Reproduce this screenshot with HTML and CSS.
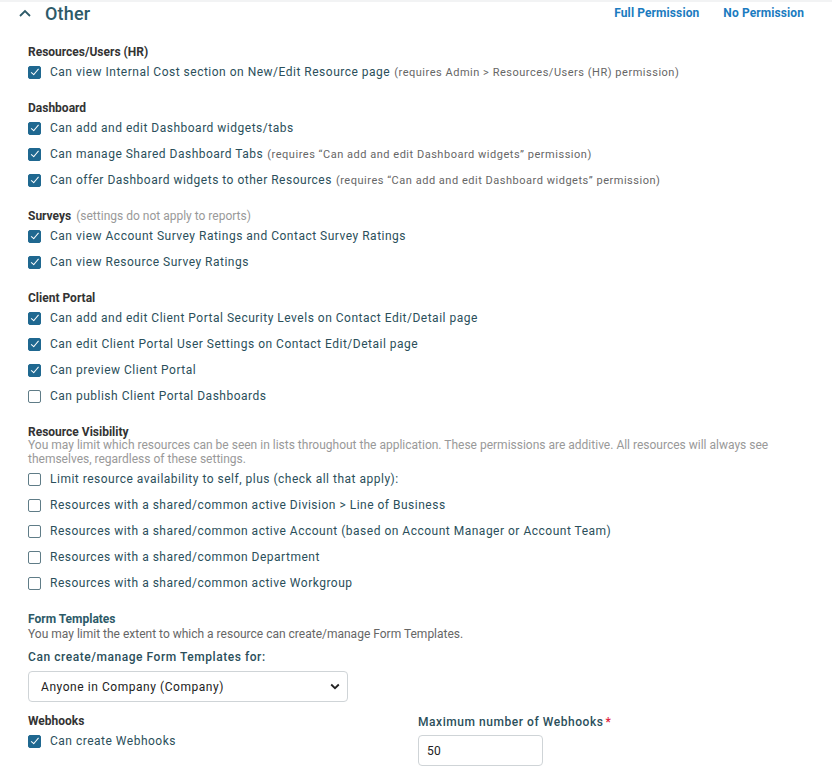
FILE: index.html
```html
<!DOCTYPE html>
<html>
<head>
<meta charset="utf-8">
<link rel="stylesheet" href="styles.css">
</head>
<body>
<div class="topstrip"></div>
<div class="header">
  <div class="title">
    <svg class="chev" width="14" height="10" viewBox="0 0 14 10"><path d="M2 8 L7 3 L12 8" fill="none" stroke="#2d5a68" stroke-width="1.8"/></svg>
    <span class="title-text">Other</span>
  </div>
  <div class="links">
    <a class="link">Full Permission</a>
    <a class="link">No Permission</a>
  </div>
</div>

<div class="content">
  <section class="group">
    <div class="heading">Resources/Users (HR)</div>
    <label class="row"><span class="cb on"></span><span class="lbl">Can view Internal Cost section on New/Edit Resource page</span><span class="note">(requires Admin &gt; Resources/Users (HR) permission)</span></label>
  </section>

  <section class="group">
    <div class="heading">Dashboard</div>
    <label class="row"><span class="cb on"></span><span class="lbl">Can add and edit Dashboard widgets/tabs</span></label>
    <label class="row"><span class="cb on"></span><span class="lbl">Can manage Shared Dashboard Tabs</span><span class="note">(requires “Can add and edit Dashboard widgets” permission)</span></label>
    <label class="row"><span class="cb on"></span><span class="lbl">Can offer Dashboard widgets to other Resources</span><span class="note">(requires “Can add and edit Dashboard widgets” permission)</span></label>
  </section>

  <section class="group">
    <div class="heading">Surveys <span class="heading-note">(settings do not apply to reports)</span></div>
    <label class="row"><span class="cb on"></span><span class="lbl">Can view Account Survey Ratings and Contact Survey Ratings</span></label>
    <label class="row"><span class="cb on"></span><span class="lbl">Can view Resource Survey Ratings</span></label>
  </section>

  <section class="group">
    <div class="heading">Client Portal</div>
    <label class="row"><span class="cb on"></span><span class="lbl">Can add and edit Client Portal Security Levels on Contact Edit/Detail page</span></label>
    <label class="row"><span class="cb on"></span><span class="lbl">Can edit Client Portal User Settings on Contact Edit/Detail page</span></label>
    <label class="row"><span class="cb on"></span><span class="lbl">Can preview Client Portal</span></label>
    <label class="row"><span class="cb"></span><span class="lbl">Can publish Client Portal Dashboards</span></label>
  </section>

  <section class="group">
    <div class="heading">Resource Visibility</div>
    <div class="desc">You may limit which resources can be seen in lists throughout the application. These permissions are additive. All resources will always see themselves, regardless of these settings.</div>
    <label class="row"><span class="cb"></span><span class="lbl">Limit resource availability to self, plus (check all that apply):</span></label>
    <label class="row"><span class="cb"></span><span class="lbl">Resources with a shared/common active Division &gt; Line of Business</span></label>
    <label class="row"><span class="cb"></span><span class="lbl">Resources with a shared/common active Account (based on Account Manager or Account Team)</span></label>
    <label class="row"><span class="cb"></span><span class="lbl">Resources with a shared/common Department</span></label>
    <label class="row"><span class="cb"></span><span class="lbl">Resources with a shared/common active Workgroup</span></label>
  </section>

  <section class="group tight">
    <div class="heading teal">Form Templates</div>
    <div class="desc dark">You may limit the extent to which a resource can create/manage Form Templates.</div>
    <div class="field-label">Can create/manage Form Templates for:</div>
    <div class="select">
      <span>Anyone in Company (Company)</span>
      <svg width="10" height="7" viewBox="0 0 10 7"><path d="M1.2 1.5 L5 5.2 L8.8 1.5" fill="none" stroke="#222" stroke-width="1.8"/></svg>
    </div>
  </section>

  <section class="group two-col">
    <div>
      <div class="heading">Webhooks</div>
      <label class="row"><span class="cb on"></span><span class="lbl">Can create Webhooks</span></label>
    </div>
    <div>
      <div class="field-label">Maximum number of Webhooks<span class="req">*</span></div>
      <div class="input">50</div>
    </div>
  </section>
</div>
</body>
</html>
```

FILE: styles.css
```css
html, body {
  margin: 0;
  padding: 0;
  background: #fff;
  font-family: Roboto, "Liberation Sans", Arial, sans-serif;
  font-size: 12px;
  color: #333;
}

.topstrip {
  height: 2px;
  background: #f2f3f4;
}

.header {
  display: flex;
  justify-content: space-between;
  align-items: center;
  height: 22px;
  padding: 0 28px 0 18px;
}

.title {
  display: flex;
  align-items: center;
  gap: 13px;
}

.chev {
  display: block;
}

.title-text {
  font-size: 18px;
  font-weight: 500;
  color: #2d5a68;
  letter-spacing: 0.2px;
}

.links {
  display: flex;
  gap: 24px;
}

.link {
  font-size: 12px;
  font-weight: 700;
  color: #1b7bc0;
  letter-spacing: 0.1px;
}

.content {
  padding: 19px 28px 0 28px;
}

.group {
  margin-bottom: 14px;
}

.group.tight {
  margin-bottom: 10px;
}

.heading {
  font-weight: 700;
  font-size: 12px;
  line-height: 14px;
  padding-top: 2px;
  color: #333;
}

.heading.teal {
  color: #2d5a68;
}

.heading-note {
  font-weight: 400;
  color: #999;
  margin-left: 2px;
}

.desc {
  font-size: 12px;
  line-height: 14px;
  margin-top: -1px;
  color: #999;
}

.desc.dark {
  color: #666;
  margin-top: 0;
  line-height: 16px;
}

.row {
  display: flex;
  align-items: center;
  height: 26px;
}

.cb {
  box-sizing: border-box;
  width: 13px;
  height: 13px;
  border: 1px solid #5f7c87;
  border-radius: 2px;
  background: #fff;
  margin-right: 9px;
  flex: none;
  position: relative;
}

.cb.on {
  background: #1f6890;
  border-color: #1f6890;
}

.cb.on::after {
  content: "";
  position: absolute;
  left: 3.5px;
  top: 0.5px;
  width: 3px;
  height: 6.5px;
  border-right: 1.8px solid #fff;
  border-bottom: 1.8px solid #fff;
  transform: rotate(40deg);
}

.lbl {
  color: #2b4f5b;
  letter-spacing: 0.5px;
  white-space: nowrap;
}

.note {
  color: #666;
  font-size: 11px;
  letter-spacing: 0.52px;
  margin-left: 4px;
  white-space: nowrap;
}

.field-label {
  color: #2b4f5b;
  font-weight: 500;
  letter-spacing: 0.55px;
  line-height: 16px;
  margin-top: 7px;
}

.req {
  color: #e0203a;
  margin-left: 2px;
}

.select {
  box-sizing: border-box;
  width: 320px;
  height: 31px;
  margin-top: 6px;
  border: 1px solid #cfd4d7;
  border-radius: 4px;
  display: flex;
  align-items: center;
  justify-content: space-between;
  padding: 0 7px 0 12px;
  color: #222;
  letter-spacing: 0.55px;
}

.two-col {
  display: grid;
  grid-template-columns: 390px 1fr;
}

.two-col .field-label {
  margin-top: 2px;
}

.input {
  box-sizing: border-box;
  width: 125px;
  height: 31px;
  margin-top: 5px;
  border: 1px solid #cfd4d7;
  border-radius: 4px;
  display: flex;
  align-items: center;
  padding: 0 8px;
  color: #222;
  letter-spacing: 0.3px;
}
```
